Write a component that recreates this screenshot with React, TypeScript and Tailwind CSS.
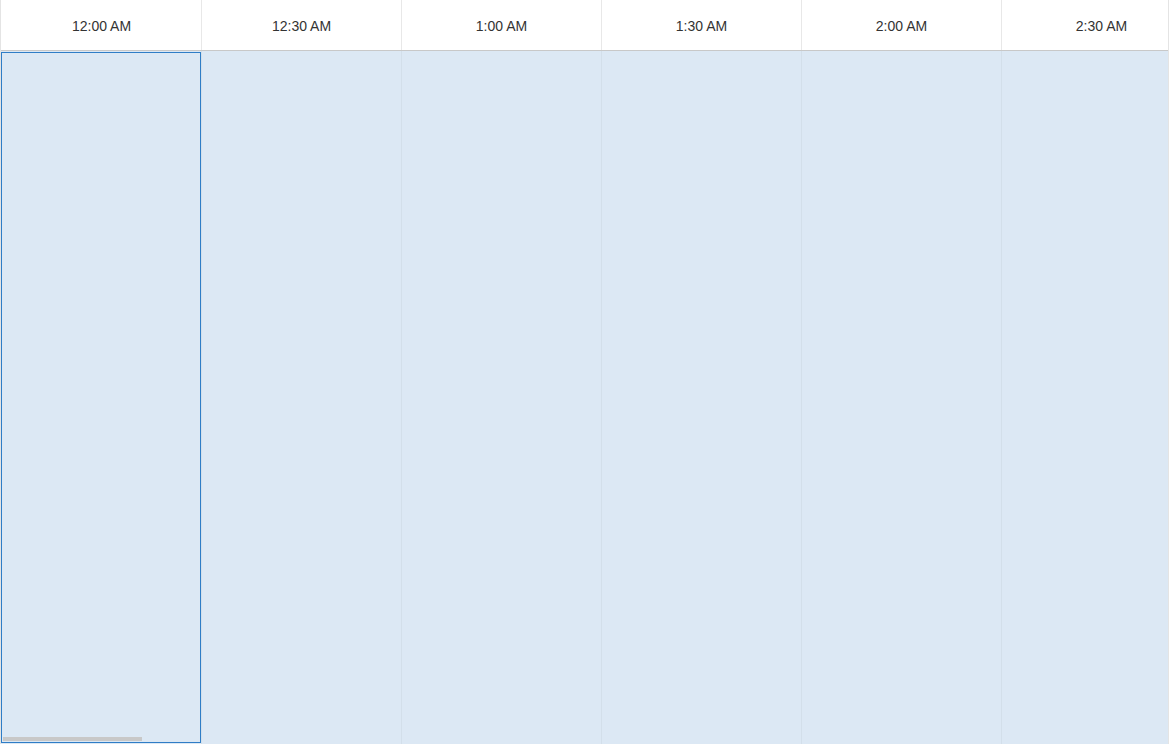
import React from 'react'

const slots = ['12:00 AM', '12:30 AM', '1:00 AM', '1:30 AM', '2:00 AM', '2:30 AM']

export default function App() {
  return (
    <div
      className="relative w-[1169px] h-[744px] overflow-hidden bg-white border-l border-r border-[#e4e4e4]"
      style={{ fontFamily: '"Liberation Sans", Arial, sans-serif' }}
    >
      {/* header */}
      <div className="flex h-[51px] pl-[1px] border-b border-[#c8c8c8] bg-white">
        {slots.map((s) => (
          <div
            key={s}
            className="shrink-0 w-[200px] h-full pt-[2px] flex items-center justify-center border-r border-[#e8e8e8] text-[14px] text-[#333333]"
          >
            {s}
          </div>
        ))}
      </div>

      {/* body */}
      <div className="flex h-[693px] pl-[1px] bg-[#dce8f4]">
        {slots.map((s) => (
          <div key={s} className="shrink-0 w-[200px] h-full border-r border-[#d3dfea]" />
        ))}
      </div>

      {/* selected cell */}
      <div className="absolute left-0 top-[52px] w-[200px] h-[691px] border border-[#2f7dc6]" />

      {/* horizontal scrollbar thumb */}
      <div className="absolute left-[2px] top-[737px] w-[139px] h-[4px] bg-[#c8c8c8]" />
    </div>
  )
}
